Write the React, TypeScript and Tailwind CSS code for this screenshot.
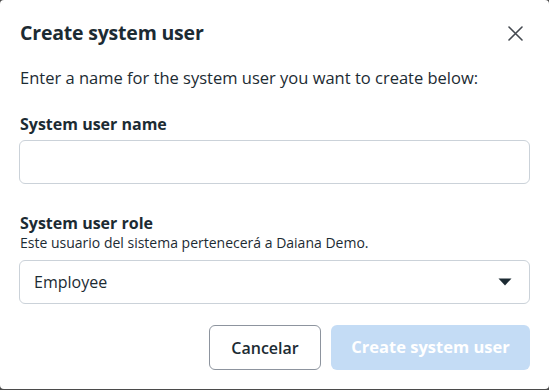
export default function App() {
  return (
    <div className="w-[549px] h-[390px] bg-[#4b4b4b] font-['Open_Sans',sans-serif] text-[#1c2b33]">
      <div className="h-[389px] bg-white rounded-[4px] px-[19px] pt-[21px] flex flex-col">
        <div className="flex items-center justify-between h-[24px]">
          <h1 className="text-[19.5px] font-bold tracking-[-0.2px] pl-[1px]">Create system user</h1>
          <button className="w-[24px] h-[24px] flex items-center justify-center mr-[3px]">
            <svg width="15" height="15" viewBox="0 0 15 15">
              <path d="M1 1 L14 14 M14 1 L1 14" stroke="#444950" strokeWidth="1.6" strokeLinecap="round" />
            </svg>
          </button>
        </div>

        <p className="mt-[21px] text-[16.5px] leading-[24px] pl-[1px]">
          Enter a name for the system user you want to create below:
        </p>

        <label className="mt-[24px] text-[16px] font-bold leading-[20px] pl-[1px]">System user name</label>
        <input
          type="text"
          className="mt-[6px] h-[44px] w-full border border-[#cbd2d9] rounded-[6px] px-[14px] outline-none"
        />

        <div className="mt-[29px] text-[16px] font-bold leading-[20px] pl-[1px]">System user role</div>
        <div className="text-[14px] leading-[20px] pl-[1px]">
          Este usuario del sistema pertenecerá a Daiana Demo.
        </div>
        <div className="mt-[7px] h-[44px] w-full border border-[#cbd2d9] rounded-[6px] pl-[14px] pr-[17px] flex items-center justify-between">
          <span className="text-[16px]">Employee</span>
          <svg width="14" height="8" viewBox="0 0 14 8">
            <path d="M0.5 0.5 L13.5 0.5 L7 7.5 Z" fill="#1c2b33" />
          </svg>
        </div>

        <div className="mt-[21px] flex justify-end gap-[10px]">
          <button className="h-[45px] w-[112px] border border-[#8d949e] rounded-[6px] text-[16px] font-semibold bg-white">
            Cancelar
          </button>
          <button className="h-[45px] w-[199px] rounded-[6px] text-[16.5px] font-bold bg-[#c4dcf5] text-white">
            Create system user
          </button>
        </div>
      </div>
    </div>
  );
}
